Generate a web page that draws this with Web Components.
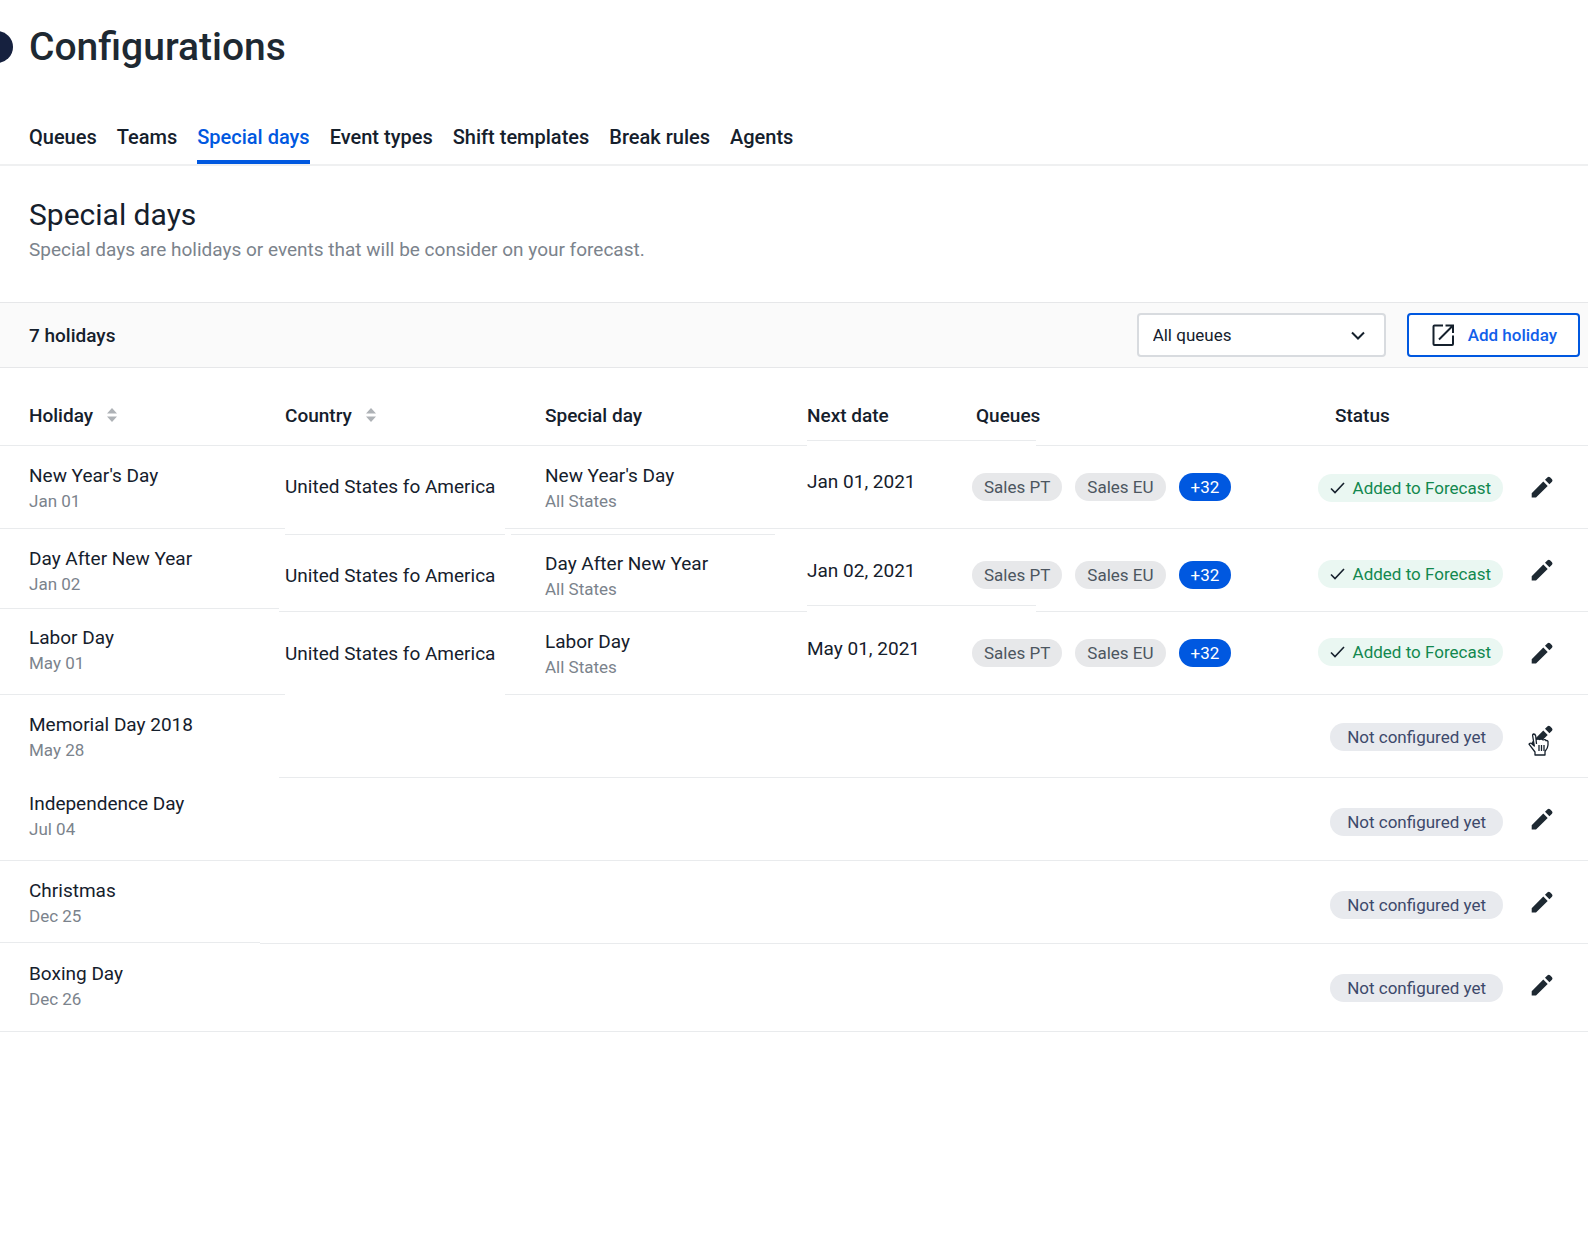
<!DOCTYPE html>
<html lang="en">
<head>
<meta charset="utf-8">
<meta name="viewport" content="width=device-width, initial-scale=1">
<title>Configurations</title>
<style>
  body {
    margin: 0;
    background: #fff;
    color: #15202c;
    font-family: Roboto, "Liberation Sans", sans-serif;
    --gutter: 29px;
    --line: #e9ebed;
    --blue: #0058e0;
    --muted: #7b838c;
  }
</style>
</head>
<body>
<config-page></config-page>

<script>
const define = (name, html) => customElements.define(name, class extends HTMLElement {
  constructor() {
    super();
    this.attachShadow({ mode: 'open' }).innerHTML = html;
  }
});

define('page-title', `
  <style>
    :host { display: flex; align-items: center; padding-top: 23px; }
    svg { display: block; width: 13px; height: 32px; margin-right: 16px; }
    button { border: 0; padding: 0; background: none; }
    h1 { margin: 0; font-size: 39px; line-height: 48px; font-weight: 500; color: #1e2932; }
  </style>
  <button aria-label="Open menu"><svg viewBox="0 0 13 32"><circle cx="-3" cy="16" r="16" fill="#16213f"/></svg></button>
  <h1><slot></slot></h1>
`);

define('tab-link', `
  <style>
    :host { display: block; }
    a { display: block; line-height: 24px; padding: 2px 0 11px; border-bottom: 4px solid transparent;
        font-size: 20px; font-weight: 500; color: inherit; text-decoration: none; }
    :host([current]) a { color: var(--blue); border-color: var(--blue); }
  </style>
  <a href="#"><slot></slot></a>
`);

define('tab-bar', `
  <style>
    :host { display: block; margin-top: 52px; border-bottom: 2px solid #eff0f1; }
    nav { display: flex; gap: 20px; padding-left: var(--gutter); }
  </style>
  <nav><slot></slot></nav>
`);

define('section-intro', `
  <style>
    :host { display: block; padding: 29px var(--gutter) 40px; }
    h2 { margin: 0; font-size: 30px; line-height: 40px; font-weight: 400; }
    p { margin: 3px 0 0; font-size: 19px; line-height: 24px; color: var(--muted); }
  </style>
  <h2><slot name="title"></slot></h2>
  <p><slot></slot></p>
`);

define('queue-filter', `
  <style>
    :host { display: block; width: 249px; }
    label { display: grid; align-items: center; }
    select, svg { grid-area: 1 / 1; }
    select { appearance: none; box-sizing: border-box; width: 100%; height: 44px; padding: 0 14px; border: 2px solid #d8dbdf;
             border-radius: 4px; background: #fff; color: inherit; font: 400 17px Roboto, sans-serif; }
    svg { justify-self: end; width: 14px; height: 9px; margin-right: 21px; pointer-events: none; }
  </style>
  <label aria-label="Queue filter">
    <select><option>All queues</option></select>
    <svg viewBox="0 0 14 9" fill="none" stroke="#15202c" stroke-width="2"><path d="M1 1.500L7 7.500L13 1.500"/></svg>
  </label>
`);

define('add-button', `
  <style>
    :host { display: block; }
    button { box-sizing: border-box; display: flex; align-items: center; gap: 14px; height: 44px; padding: 0 21px 0 23px;
             border: 2px solid var(--blue); border-radius: 4px; background: #fff; color: #1260ea;
             font: 500 17px Roboto, sans-serif; white-space: nowrap; }
    svg { display: block; width: 22px; height: 22px; }
  </style>
  <button>
    <svg viewBox="0 0 22 22" fill="none" stroke="#15202c" stroke-width="2">
      <path d="M11 1.500H2.500Q1.500 1.500 1.500 2.500V20Q1.500 21 2.500 21H20Q21 21 21 20V11.500M7 15.500L20.500 2M13.500 1.500H21V9"/>
    </svg>
    <slot></slot>
  </button>
`);

define('list-toolbar', `
  <style>
    :host { display: flex; align-items: center; gap: 21px; height: 64px; padding: 0 8px 0 var(--gutter);
            border-top: 1px solid #e6e7e9; border-bottom: 1px solid #e6e7e9; background: #fafafa; }
    strong { flex: 1; font-size: 19px; font-weight: 500; }
  </style>
  <strong><slot name="count"></slot></strong>
  <slot></slot>
`);

define('sort-icon', `
  <style>
    :host { display: inline-block; margin-left: 14px; }
    svg { display: block; width: 10px; height: 14px; }
  </style>
  <svg viewBox="0 0 10 14" fill="#aeb2b6"><path d="M5 0L10 5.500H0zM5 14L0 8.500H10z"/></svg>
`);

define('queue-chip', `
  <style>
    :host { display: block; box-sizing: border-box; height: 28px; line-height: 28px; padding: 0 12px; border-radius: 14px;
            background: #e7e8ea; color: #4c565f; font-size: 17px; white-space: nowrap; }
    :host([more]) { background: var(--blue); color: #fff; }
  </style>
  <slot></slot>
`);

define('status-pill', `
  <style>
    :host { display: inline-flex; align-items: center; box-sizing: border-box; height: 28px; padding: 0 17px; border-radius: 14px;
            background: #e8eaee; color: #3d496b; font-size: 17px; white-space: nowrap; }
    :host([added]) { gap: 8px; padding: 0 12px; background: #eaf7f2; color: #12884f; }
    svg { display: none; width: 15px; height: 12px; }
    :host([added]) svg { display: block; }
  </style>
  <svg viewBox="0 0 15 12" fill="none" stroke="#15202c" stroke-width="1.600"><path d="M1 6.500L5 10.500L14 1"/></svg>
  <slot></slot>
`);

define('edit-button', `
  <style>
    :host { display: block; }
    button { display: block; padding: 0; border: 0; background: none; }
    svg { display: block; width: 22px; height: 22px; }
  </style>
  <button aria-label="Edit">
    <svg viewBox="0 0 22 22" fill="#1e2932"><path d="M0.700 21.500V17.200L12.300 5.500L16.700 9.900L5 21.500zM14 3.800L16.600 1.300Q17.800 0.300 19 1.300L21 3.300Q22 4.500 21 5.700L18.400 8.200z"/></svg>
  </button>
`);

define('hand-cursor', `
  <style>
    :host { position: absolute; left: -3px; top: 8px; pointer-events: none; }
    svg { display: block; width: 22px; height: 23px; }
  </style>
  <svg viewBox="0 0 22 23" fill="#fff" stroke="#15202c" stroke-width="1.300" stroke-linejoin="round">
    <path d="M8.500 11L7.700 3Q7.200 1 5.800 1Q4.300 1.200 4.700 3L6.300 13L3.500 10.500Q1.500 9.700 1 11.200L7 19V22H17V18.500Q20 15 20 12V8.500Q19.500 7 18 7.800Q17.500 6 15 7Q14 5.500 11.500 6.500Q10.500 5.500 8 6.500"/>
    <path d="M11 12V18M13.500 12V18M16 12V18"/>
  </svg>
`);

const HOLIDAYS = [
  { name: "New Year's Day", day: 'Jan 01', date: 'Jan 01, 2021' },
  { name: 'Day After New Year', day: 'Jan 02', date: 'Jan 02, 2021' },
  { name: 'Labor Day', day: 'May 01', date: 'May 01, 2021' },
  { name: 'Memorial Day 2018', day: 'May 28', pointer: true },
  { name: 'Independence Day', day: 'Jul 04' },
  { name: 'Christmas', day: 'Dec 25' },
  { name: 'Boxing Day', day: 'Dec 26' },
];

const row = (h, i) => `
  <tr class="r${i + 1}">
    <td class="pair">${h.name}<small>${h.day}</small></td>
    ${h.date ? `
    <td class="country">United States fo America</td>
    <td class="pair">${h.name}<small>All States</small></td>
    <td class="date">${h.date}</td>
    <td class="queues"><div class="chips"><queue-chip>Sales PT</queue-chip><queue-chip>Sales EU</queue-chip><queue-chip more>+32</queue-chip></div></td>
    <td class="status"><status-pill added>Added to Forecast</status-pill></td>`
    : `<td></td><td></td><td></td><td></td>
    <td class="status"><status-pill>Not configured yet</status-pill></td>`}
    <td class="edit"><div class="hold"><edit-button></edit-button>${h.pointer ? '<hand-cursor></hand-cursor>' : ''}</div></td>
  </tr>`;

define('holiday-table', `
  <style>
    :host { display: block; --rule: linear-gradient(var(--line), var(--line)); }
    table { width: 100%; table-layout: fixed; border-collapse: collapse; font-size: 19px; line-height: 24px; }
    col.holiday { width: 285px; } col.country { width: 260px; } col.special { width: 262px; }
    col.date { width: 165px; } col.state { width: 200px; } col.tools { width: 85px; }
    th, td { padding: 0; text-align: left; vertical-align: top; white-space: nowrap; }
    th { padding-top: 36px; font-weight: 500; }
    th:first-child, td:first-child { padding-left: var(--gutter); }
    th.queues { padding-left: 4px; }
    th.status { padding-left: 32px; }
    td { padding-top: 29px; }
    td.pair { padding-top: 18px; }
    td.date { padding-top: 24px; }
    td.queues { padding-top: 27px; }
    td.status { padding-top: 28px; text-align: right; line-height: 0; }
    td.edit { padding-top: 30px; padding-left: 28px; }
    small { display: block; font-size: 17px; line-height: 26px; color: var(--muted); }
    .chips { display: flex; gap: 13px; }
    .hold { position: relative; width: 22px; }

    /* each row is ruled at its foot; some rules are stepped or broken between columns */
    tr { height: 83px; background: var(--rule) left bottom / 100% 1px no-repeat; }
    tr.head { height: 78px; background:
      var(--rule) left bottom / 807px 1px no-repeat,
      var(--rule) 807px calc(100% - 5px) / 229px 1px no-repeat,
      linear-gradient(to right, transparent 1036px, var(--line) 1036px) left bottom / 100% 1px no-repeat; }
    tr.r1, tr.r3 { background:
      linear-gradient(to right, var(--line) 285px, transparent 285px 505px, var(--line) 505px) left bottom / 100% 1px no-repeat; }
    tr.r2 { background:
      var(--rule) 285px 5px / 220px 1px no-repeat,
      var(--rule) 511px 5px / 264px 1px no-repeat,
      var(--rule) left calc(100% - 3px) / 279px 1px no-repeat,
      var(--rule) 807px calc(100% - 6px) / 229px 1px no-repeat,
      linear-gradient(to right, transparent 279px, var(--line) 279px 807px, transparent 807px 1036px, var(--line) 1036px) left bottom / 100% 1px no-repeat; }
    tr.r4 { background: linear-gradient(to right, transparent 279px, var(--line) 279px) left bottom / 100% 1px no-repeat; }
    tr.r6 { background:
      var(--rule) left calc(100% - 1px) / 260px 1px no-repeat,
      linear-gradient(to right, transparent 260px, var(--line) 260px) left bottom / 100% 1px no-repeat; }
    tr.r7 { height: 88px; }

    /* the second row sits lower in its detail columns, under the stepped rule */
    tr.r2 td.country { padding-top: 35px; }
    tr.r2 td.country + td.pair { padding-top: 23px; }
    tr.r2 td.queues { padding-top: 32px; }
    tr.r2 td.date { padding-top: 30px; }
    tr.r2 td.status { padding-top: 31px; }
    tr.r3 td.pair, tr.r5 td.pair { padding-top: 14px; }
    tr.r3 td.country { padding-top: 30px; }
    tr.r3 td.country + td.pair { padding-top: 18px; }
    tr.r3 td.date { padding-top: 25px; }
    tr.r3 td.status { padding-top: 26px; }
    tr.r5 td.status, tr.r6 td.status, tr.r7 td.status { padding-top: 30px; }
  </style>
  <table>
    <colgroup><col class="holiday"><col class="country"><col class="special"><col class="date"><col><col class="state"><col class="tools"></colgroup>
    <thead>
      <tr class="head">
        <th>Holiday<sort-icon></sort-icon></th><th>Country<sort-icon></sort-icon></th><th>Special day</th>
        <th>Next date</th><th class="queues">Queues</th><th class="status">Status</th><th></th>
      </tr>
    </thead>
    <tbody>${HOLIDAYS.map(row).join('')}</tbody>
  </table>
`);

define('config-page', `
  <style>:host { display: block; }</style>
  <page-title>Configurations</page-title>
  <tab-bar>
    <tab-link>Queues</tab-link><tab-link>Teams</tab-link><tab-link current>Special days</tab-link>
    <tab-link>Event types</tab-link><tab-link>Shift templates</tab-link><tab-link>Break rules</tab-link><tab-link>Agents</tab-link>
  </tab-bar>
  <section-intro>
    <span slot="title">Special days</span>
    Special days are holidays or events that will be consider on your forecast.
  </section-intro>
  <list-toolbar>
    <span slot="count">7 holidays</span>
    <queue-filter></queue-filter>
    <add-button>Add holiday</add-button>
  </list-toolbar>
  <holiday-table></holiday-table>
`);
</script>
</body>
</html>
